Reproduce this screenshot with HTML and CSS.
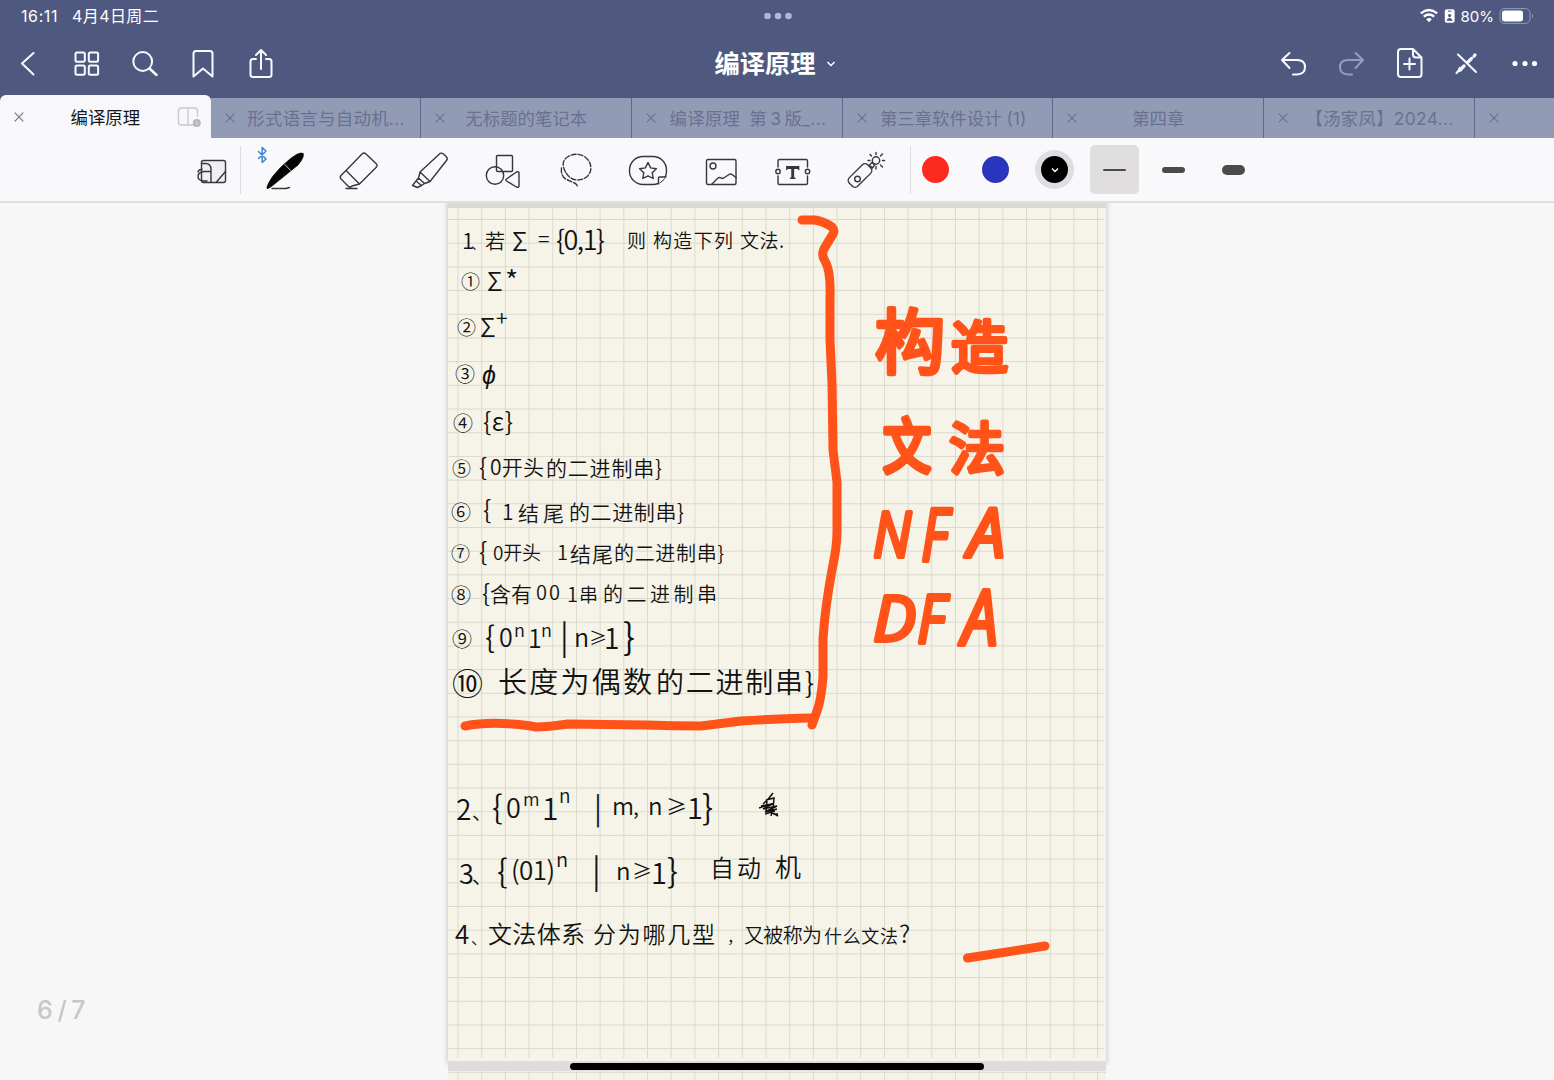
FILE: index.html
```html
<!DOCTYPE html>
<html lang="zh-CN">
<head>
<meta charset="utf-8">
<title>编译原理</title>
<link rel="stylesheet" href="styles.css">
</head>
<body>
<div class="app">
  <header class="header">
    <div class="status">
      <div class="status-left"><span>16:11</span><span class="date">4月4日周二</span></div>
      <svg class="dots" width="30" height="10" viewBox="762 11 30 10"><g fill="#abb6e4"><circle cx="766.5" cy="16" r="3.3"/><circle cx="777" cy="16" r="3.3"/><circle cx="787.5" cy="16" r="3.3"/></g></svg>
      <div class="status-right">
        <svg width="36" height="18" viewBox="1418 7 36 18"><g fill="none" stroke="#fff" stroke-width="2.4"><path d="M1419.8 13.4Q1428 6.600 1436.200 13.400M1422.800 16.700Q1428 12.400 1433.200 16.700"/></g><path d="M1425.200 19.200Q1428 16.800 1430.800 19.200L1428 22.300Z" fill="#fff"/><rect x="1443.800" y="9.300" width="9.800" height="13.400" rx="2" fill="#fff"/><path d="M1447 11.200h3.500M1446 20.300q2.600-4 5.200 0z" stroke="#4f597f" fill="#4f597f"/><circle cx="1448.600" cy="15.500" r="1.600" fill="#4f597f"/></svg>
        <span class="percent">80%</span>
        <svg width="35" height="18" viewBox="1499 7 35 18"><rect x="1500" y="8.600" width="30" height="14.800" rx="4.500" fill="none" stroke="#9299bd"/><rect x="1502" y="10.600" width="21" height="10.800" rx="2.600" fill="#fff"/><path d="M1532 13.500q2 2.500 0 5z" fill="#9299bd"/></svg>
      </div>
    </div>
    <div class="navbar">
      <nav class="actions">
        <svg viewBox="8 44 40 40"><path d="M33.500 53L22 63.500 33.500 74.500"/></svg>
        <svg viewBox="66.500 44 40 40"><rect x="76" y="52.500" width="9.300" height="9.300" rx="1.500"/><rect x="89.300" y="52.500" width="9.300" height="9.300" rx="1.500"/><rect x="76" y="65.500" width="9.300" height="9.300" rx="1.500"/><rect x="89.300" y="65.500" width="9.300" height="9.300" rx="1.500"/></svg>
        <svg viewBox="125 44 40 40"><circle cx="142.700" cy="61.500" r="9.400"/><path d="M149.500 68.500l7 6.500" stroke-width="2.500"/></svg>
        <svg viewBox="183 44 40 40"><path d="M193.500 76.500V53.500q0-2.500 2.500-2.500h14q2.500 0 2.500 2.500v23L203 68.500Z"/></svg>
        <svg viewBox="241 44 40 40"><path d="M256 59h-3q-2.500 0-2.500 2.500v13q0 2.500 2.500 2.500h16q2.500 0 2.500-2.500v-13q0-2.500-2.500-2.500h-3M261 69V50.500M256 55l5-5 5 5"/></svg>
      </nav>
      <h1 class="title">编译原理<svg class="chevron" viewBox="0 0 10 8"><path d="M1.500 2l3.500 3.500L8.500 2"/></svg></h1>
      <nav class="actions end">
        <svg viewBox="1274 44 40 40"><path d="M1289.500 53L1282 60l7.500 8M1282 60H1297q8 0 8 7t-8 7.500h-4"/></svg>
        <svg class="dim" viewBox="1332 44 40 40"><path d="M1355.500 53L1363 60l-7.500 8M1363 60H1348q-8 0-8 7t8 7.500h4"/></svg>
        <svg viewBox="1389 44 40 40"><path d="M1413 49h-12q-3 0-3 3v22q0 3 3 3h18q2.500 0 2.500-3V57.500ZM1413 49v5.500q0 3 3 3h5.500M1409.500 58.500v11M1404 64h11"/></svg>
        <svg viewBox="1447.500 44 40 40"><path d="M1458.500 54.500l18 17.500"/><path d="M1475.500 55l-1 1.200M1472 58.500l-4 4M1464.500 66l-4 4" stroke-width="3.200"/><path d="M1460 66.500l-4 7.500 7-4z" fill="#fff" stroke="none"/><path d="M1457 73l5-5"/></svg>
        <svg viewBox="1505 44 40 40"><g fill="#fff" stroke="none"><circle cx="1515" cy="63.500" r="2.600"/><circle cx="1525" cy="63.500" r="2.600"/><circle cx="1534.500" cy="63.500" r="2.600"/></g></svg>
      </nav>
    </div>
    <div class="tabs">
      <div class="tab active"><svg class="x" viewBox="0 0 10 10"><path d="M.7.700l8.600 8.600M9.300.700L.7 9.300"/></svg><span>编译原理</span><svg class="split" viewBox="177 106 26 22"><path d="M195 125h-14q-2.500 0-2.500-3v-11q0-3 2.500-3h13.500q3 0 3 3v6M188 108v17" fill="none" stroke="#c8c7cb" stroke-width="1.300"/><circle cx="196.800" cy="123" r="4" fill="#b5b4b9"/><path d="M193.500 123h6.500M196.800 120v6" stroke="#d8d7dc" stroke-width=".7"/></svg></div>
      <div class="tab long"><svg class="x" viewBox="0 0 10 10"><path d="M.7.700l8.600 8.600M9.300.700L.7 9.300"/></svg><span>形式语言与自动机...</span></div>
      <div class="tab"><svg class="x" viewBox="0 0 10 10"><path d="M.7.700l8.600 8.600M9.300.700L.7 9.300"/></svg><span>无标题的笔记本</span></div>
      <div class="tab long spaced"><svg class="x" viewBox="0 0 10 10"><path d="M.7.700l8.600 8.600M9.300.700L.7 9.300"/></svg><span>编译原理&ensp;第 3 版_...</span></div>
      <div class="tab long wide"><svg class="x" viewBox="0 0 10 10"><path d="M.7.700l8.600 8.600M9.300.700L.7 9.300"/></svg><span>第三章软件设计 (1)</span></div>
      <div class="tab"><svg class="x" viewBox="0 0 10 10"><path d="M.7.700l8.600 8.600M9.300.700L.7 9.300"/></svg><span>第四章</span></div>
      <div class="tab long"><svg class="x" viewBox="0 0 10 10"><path d="M.7.700l8.600 8.600M9.300.700L.7 9.300"/></svg><span>【汤家凤】2024...</span></div>
      <div class="tab"><svg class="x" viewBox="0 0 10 10"><path d="M.7.700l8.600 8.600M9.300.700L.7 9.300"/></svg></div>
    </div>
  </header>

  <div class="toolbar">
    <div class="tool mode"><svg viewBox="188 146 48 48"><rect x="201.500" y="160.500" width="24" height="22" rx="2" fill="#f0eff5"/><path d="M201.500 163.500h4q5.500 0 5.500 6v12.500M211 171.500h-7q-6 1-6 5t6 4.500h3M198 172q1-3 4-2.500M216.500 182l9-10.500"/></svg></div>
    <div class="tools">
      <div class="tool"><svg class="pen" viewBox="253 146 56 48"><path d="M258.500 151.500l7.500 7.500-3.800 3.500v-15l3.800 3.500-7.500 7.500" stroke="#3d86cf" stroke-width="1.500"/><path d="M303 153.500q2 3-5 11.500L272 186q-4 3-5 2.500-.5-3 6-12.500 7-9 17-17t13-5.500Z" fill="#050505" stroke="#050505" stroke-width=".8"/><path d="M285 164.500l5.500 6" stroke="#c5c5c5" stroke-width="1"/><path d="M272 188.500h14l3.500-1"/></svg></div>
      <div class="tool"><svg viewBox="334 146 48 48"><path d="M346 170.500L362 154q2-2 4 0l10 9.500q2 2 0 4L359.500 184ZM346 170.500l-5 5q-1.500 1.500 0 3.500l7 7q2 2 4 0l7.500-2M346 188.500h11"/></svg></div>
      <div class="tool"><svg viewBox="407 146 48 48"><path d="M421 172L441 153.500q2-1 3.500.5l3 3q1.500 1.500 0 3.500L431 181.500ZM421 172l-1.500 6 6 5.500 5.500-2M419.500 178l-2.500 3 5.500 4.500 3-2M417 181l-3.500 4.500 5 2 4-2"/></svg></div>
      <div class="tool"><svg viewBox="479 146 48 48"><rect x="496.500" y="155.500" width="16" height="16" rx="1"/><circle cx="495" cy="175.500" r="8.700"/><path d="M506.500 179l10-7q2-1 2.500 1v13q-.5 2-2.500 1l-10-6q-1.500-1 0-2Z"/></svg></div>
      <div class="tool"><svg viewBox="552 146 48 48"><path d="M565.500 172Q560 162 567.500 157q8-5 16-1 9 6 7 15-3 9-14 9-7-1-11-8" stroke-dasharray="5 2"/><path d="M561.500 168q-1 7 4 11l9 4q3 1.500 3 4" stroke-dasharray="5 2"/></svg></div>
      <div class="tool"><svg viewBox="624 146 48 48"><rect x="629.500" y="156.500" width="37" height="28" rx="13.500"/><path d="M648 162.500l2.600 5.400 5.800.8-4.200 4 1 5.800-5.200-2.700-5.200 2.700 1-5.800-4.200-4 5.800-.8Z"/><path d="M658.500 184v-6q0-1 1-1h6.500" fill="#f9f8fa"/></svg></div>
      <div class="tool"><svg viewBox="696 146 48 48"><rect x="705.500" y="159.500" width="29.500" height="25" rx="1.500"/><circle cx="712" cy="166" r="3"/><path d="M711 184l6-6q1.500-1 3 0l2 .5 6-4q1.500-1 3 0l4 3"/></svg></div>
      <div class="tool"><svg viewBox="769 146 48 48"><path d="M778 167v-6q0-1.500 1.500-1.500h26.500q1.500 0 1.500 1.500v6M778 176v7q0 1.500 1.500 1.500h26.500q1.500 0 1.500-1.500v-7"/><circle cx="778" cy="171.500" r="2.200"/><circle cx="807.500" cy="171.500" r="2.200"/><path d="M787 167.500h11.500M792.700 167.500v10.500" stroke-width="2.900" stroke-linecap="butt"/><path d="M786.800 166.500v3M798.700 166.500v3M790.500 178.300h4.500"/></svg></div>
      <div class="tool"><svg viewBox="842 146 48 48"><rect x="847" y="169.500" width="26" height="12" rx="4" transform="rotate(-45 860 175.500)"/><circle cx="857.500" cy="179" r="2.800"/><path d="M869.500 165l3 3 2-3-2.500-2.500Z"/><circle cx="876" cy="160.500" r="3.700"/><path d="M876 152.500v2M870 154.500l1.500 1.500M868 160.500h2M882.500 160.500h2M880.500 156l2-2M880.500 165l2 2M876 166.500v2.500"/></svg></div>
    </div>
    <div class="styles">
      <div class="swatch"><i class="red"></i></div>
      <div class="swatch"><i class="blue"></i></div>
      <div class="swatch"><i class="black"><svg viewBox="0 0 10 8"><path d="M2 2.500l3 3 3-3"/></svg></i></div>
      <div class="stroke selected"><i></i></div>
      <div class="stroke medium"><i></i></div>
      <div class="stroke thick"><i></i></div>
    </div>
  </div>

  <main class="canvas">
    <svg class="notes" viewBox="440 203 674 877">
      <defs>
        <pattern id="grid" x="457.500" y="219" width="23.690" height="23.690" patternUnits="userSpaceOnUse"><path d="M0 .5H23.690M.5 0V23.690" stroke="#dad9ce" fill="none"/></pattern>
        <filter id="shade" x="-5%" y="-5%" width="110%" height="110%"><feGaussianBlur stdDeviation="2.500"/></filter>
      </defs>
      <rect x="447" y="198" width="660" height="865" fill="#aaa8b0" opacity=".6" filter="url(#shade)"/>
      <rect x="448" y="203" width="659" height="5" fill="#d9dcd3"/>
      <rect x="448" y="208" width="658" height="853" fill="#f6f4e8"/>
      <rect x="448" y="208" width="656" height="850" fill="url(#grid)"/>
      <rect x="448" y="1061" width="658" height="10" fill="#dfdce0"/>
      <rect x="448" y="1071" width="658" height="9" fill="#f3f3e8"/>
      <rect x="448" y="1071" width="658" height="9" fill="url(#grid)"/>
      <g class="ink">
        <text x="462" y="249" font-size="22">1</text><text x="471" y="249" font-size="14">、</text><text x="485" y="249" font-size="20">若</text><text x="512" y="251" font-size="26">Σ</text><text x="538" y="247" font-size="21">=</text><text x="556" y="250" font-size="27" textLength="49">{0,1}</text><text x="627" y="248" font-size="19">则</text><text x="653" y="248" font-size="19" textLength="80">构造下列</text><text x="740" y="248" font-size="19" textLength="44">文法.</text>
        <text class="num" x="461" y="289" font-size="19">①</text><text x="487" y="291" font-size="26">Σ</text><text x="505" y="292" font-size="29">*</text>
        <text class="num" x="457" y="335" font-size="19">②</text><text x="480" y="337" font-size="26">Σ</text><text x="496" y="326" font-size="21">+</text>
        <text class="num" x="455" y="382" font-size="20">③</text><text x="482" y="384" font-size="25">ϕ</text>
        <text class="num" x="453" y="431" font-size="20">④</text><text x="483" y="431" font-size="25" textLength="30">{ε}</text>
        <text class="num" x="452" y="476" font-size="19">⑤</text><text x="479" y="476" font-size="24">{</text><text x="490" y="475" font-size="21" textLength="54">0开头</text><text x="546" y="476" font-size="21" textLength="116">的二进制串}</text>
        <text class="num" x="451" y="520" font-size="20">⑥</text><text x="483" y="519" font-size="25">{</text><text x="502" y="520" font-size="21">1</text><text x="518" y="521" font-size="21" textLength="46">结尾</text><text x="569" y="520" font-size="21" textLength="115">的二进制串}</text>
        <text class="num" x="451" y="561" font-size="19">⑦</text><text x="479" y="561" font-size="25">{</text><text x="493" y="560" font-size="19" textLength="48">0开头</text><text x="557" y="560" font-size="20">1</text><text x="570" y="562" font-size="21" textLength="43">结尾</text><text x="614" y="561" font-size="20" textLength="110">的二进制串}</text>
        <text class="num" x="451" y="603" font-size="20">⑧</text><text x="482" y="602" font-size="24">{</text><text x="490" y="602" font-size="21" textLength="42">含有</text><text x="536" y="600" font-size="20">0</text><text x="549" y="600" font-size="20">0</text><text x="567" y="602" font-size="20">1</text><text x="579" y="602" font-size="19">串</text><text x="603" y="602" font-size="20" textLength="114">的二进制串</text>
        <text class="num" x="452" y="647" font-size="20">⑨</text><text x="485" y="648" font-size="30">{</text><text x="499" y="647" font-size="25">0</text><text x="514" y="637" font-size="18">n</text><text x="528" y="648" font-size="25">1</text><text x="541" y="637" font-size="18">n</text><text x="560" y="649" font-size="33">|</text><text x="574" y="647" font-size="25">n</text><text x="589" y="645" font-size="18">≥</text><text x="604" y="649" font-size="28">1</text><text x="623" y="650" font-size="36">}</text>
        <text class="num" x="452" y="695" font-size="31">⑩</text><text x="498" y="693" font-size="29" textLength="154">长度为偶数</text><text x="656" y="693" font-size="28" textLength="158">的二进制串}</text>
        <text x="456" y="820" font-size="28">2</text><text x="472" y="820" font-size="20">、</text><text x="492" y="819" font-size="32">{</text><text x="506" y="818" font-size="27">0</text><text x="523" y="806" font-size="18">m</text><text x="542" y="820" font-size="30">1</text><text x="559" y="803" font-size="19">n</text><text x="594" y="819" font-size="30">|</text><text x="612" y="815" font-size="24">m</text><text x="633" y="815" font-size="22">,</text><text x="648" y="815" font-size="24">n</text><text x="666" y="814" font-size="21">≥</text><text x="687" y="819" font-size="29">1</text><text x="702" y="820" font-size="34">}</text>
        <text x="459" y="884" font-size="27">3</text><text x="472" y="884" font-size="20">、</text><text x="497" y="883" font-size="32">{</text><text x="511" y="880" font-size="26" textLength="44">(01)</text><text x="556" y="867" font-size="20">n</text><text x="592" y="883" font-size="33">|</text><text x="616" y="880" font-size="24">n</text><text x="632" y="879" font-size="20">≥</text><text x="651" y="884" font-size="29">1</text><text x="667" y="883" font-size="33">}</text><text x="710" y="877" font-size="24" textLength="51">自动</text><text x="775" y="877" font-size="26">机</text>
        <text x="455" y="944" font-size="26">4</text><text x="471" y="944" font-size="16">、</text><text x="488" y="943" font-size="24" textLength="97">文法体系</text><text x="593" y="943" font-size="23" textLength="122">分为哪几型</text><text x="727" y="943" font-size="16">，</text><text x="744" y="943" font-size="20" textLength="78">又被称为</text><text x="824" y="943" font-size="18" textLength="74">什么文法</text><text x="899" y="943" font-size="24">?</text>
      </g>
      <path d="M773 793q-4 6-10 11M766 800l8-2q0 9-3 18M767 800l-1 12M759 808l15-5-11 6 14-3-12 6 12-3M761 806l11-2M765 814l10-3M768 810l10 6M773 814h5" class="scribble"/>
      <g class="marker-text">
        <text x="875" y="368" font-size="70">构</text><text x="951" y="368" font-size="57">造</text>
        <text x="883" y="468" font-size="48" transform="translate(0 -112) scale(1 1.240)">文</text><text x="949" y="469" font-size="56">法</text>
        <text class="latin" x="873" y="557" font-size="62" textLength="38" lengthAdjust="spacingAndGlyphs">N</text><text class="latin" x="921" y="561" font-size="74" textLength="27" lengthAdjust="spacingAndGlyphs">F</text><text class="latin" x="968" y="557" font-size="67" textLength="37" lengthAdjust="spacingAndGlyphs">A</text>
        <text class="latin" x="873" y="641" font-size="62" textLength="43" lengthAdjust="spacingAndGlyphs">D</text><text class="latin" x="917" y="643" font-size="68" textLength="28" lengthAdjust="spacingAndGlyphs">F</text><text class="latin" x="962" y="645" font-size="76" textLength="36" lengthAdjust="spacingAndGlyphs">A</text>
      </g>
      <g class="marker"><path d="M802 220h13q10 2 17 7 3 3 1 7-5 8-9 15-3 6 1 12 6 10 5 38v40l2 45 1 66 4 32v50q0 15-5 38-7 38-9 69v38q-2 24-6 34l-5 14"/><path d="M465 726q20-4 47-2 14 1 24 3 12 0 32-3l78 1q28 1 55 1l40-5q30-2 71-3"/><path d="M967.500 958L1045 946"/></g>
    </svg>
    <div class="page-number">6 / 7</div>
    <div class="home-indicator"></div>
  </main>
</div>
</body>
</html>
```
FILE: styles.css
```css
* { box-sizing: border-box; }
body { margin: 0; font-family: Inter, "Noto Sans CJK SC", sans-serif; background: #f7f7f8; }
.app { width: 1554px; height: 1080px; display: flex; flex-direction: column; overflow: hidden; }
.header { height: 138px; background: #4f597f; color: #fff; display: flex; flex-direction: column; }
.status { height: 32px; display: grid; grid-template-columns: 1fr 30px 1fr; align-items: center; padding: 0 20px 0 21px; font-size: 15px; }
.status-left, .status-right { display: flex; align-items: center; }
.status-left { gap: 14px; font-size: 16px; line-height: 20px; letter-spacing: .6px; }
.date { letter-spacing: .4px; line-height: 18px; padding-bottom: 1px; }
.status-right { justify-content: flex-end; gap: 4px; }
.percent { margin: 0 1px 0 2px; }
.navbar { height: 63px; display: grid; grid-template-columns: 1fr auto 1fr; align-items: center; }
.actions { display: flex; gap: 18.300px; padding-left: 8px; }
.actions.end { justify-content: flex-end; gap: 17.800px; padding: 0 9px 0 0; }
.actions svg { width: 40px; height: 40px; fill: none; stroke: #f8faff; stroke-width: 2; stroke-linecap: round; stroke-linejoin: round; }
.actions .dim { stroke: #929cc5; }
.title { margin: 0 4px 3px 0; font-size: 25.300px; font-weight: 600; display: flex; align-items: center; gap: 10px; }
.chevron { width: 10px; height: 8px; margin-top: 3px; fill: none; stroke: #fff; stroke-width: 1.500; }
.tabs { height: 43px; display: flex; align-items: flex-end; }
.tab { flex: 0 0 210.700px; height: 40px; display: flex; align-items: center; padding: 0 24px 0 14px; background: #929bb5; color: #697190; border-right: 1px solid #5d6789; font-size: 17.400px; white-space: nowrap; }
.tab span { flex: 1; text-align: center; padding-bottom: 1px; }
.tab.long { padding-right: 3px; letter-spacing: .3px; }
.tab.long.wide { padding-right: 13px; letter-spacing: 0; }
.tab.long.spaced { word-spacing: -2px; padding-right: 2px; }
.tab.active { height: 43px; padding-right: 8px; background: #f8f8fa; color: #171719; border: 0; border-radius: 6px 6px 0 0; }
.tab.active span { padding-left: 10px; }
.x { width: 10px; height: 10px; stroke: currentColor; stroke-width: 1.200; }
.active .x { color: #77777a; }
.split { width: 26px; height: 22px; }
.toolbar { height: 65px; background: #f9f8fa; border-bottom: 2px solid #dedfe0; display: flex; align-items: center; padding-left: 188px; }
.mode { width: 53px; border-right: 1px solid #dddce0; }
.tool svg { display: block; width: 48px; height: 48px; fill: none; stroke: #38363b; stroke-width: 1.400; stroke-linejoin: round; stroke-linecap: round; }
.tool .pen { width: 56px; }
.tools { width: 670px; display: flex; gap: 24.650px; padding-left: 12px; border-right: 1px solid #dddce0; }
.styles { display: flex; gap: 10.500px; align-items: center; }
.swatch, .stroke { width: 49px; height: 49px; display: flex; align-items: center; justify-content: center; }
.swatch i { width: 27px; height: 27px; border-radius: 50%; display: flex; align-items: center; justify-content: center; }
.red { background: #fc2b20; }
.blue { background: #2935bd; }
.swatch .black { background: #000; box-shadow: 0 0 0 6px #dedde2; }
.black svg { width: 10px; height: 8px; fill: none; stroke: #fff; stroke-width: 1.400; }
.stroke i { width: 23px; height: 2px; border-radius: 9px; background: #4b4b4c; }
.selected { background: #e1dee0; border-radius: 5px; }
.stroke.medium i { height: 6px; }
.stroke.thick i { height: 10px; }
.canvas { height: 877px; position: relative; display: flex; padding-left: 440px; }
.notes { width: 674px; height: 877px; }
.ink { fill: #121212; font-family: "Noto Sans CJK SC", sans-serif; font-weight: 350; font-style: oblique 8deg; }
.ink .num { font-style: normal; }
.scribble { fill: none; stroke: #111; stroke-width: 1.500; }
.marker-text { fill: #ff5319; stroke: #ff5319; stroke-width: 4.500; stroke-linejoin: round; font-family: "Noto Sans CJK SC", sans-serif; font-weight: 400; }
.marker-text .latin { font-family: "Open Sans", sans-serif; font-style: italic; font-weight: 400; stroke-width: 4; }
.marker { fill: none; stroke: #ff5319; stroke-width: 9; stroke-linejoin: round; stroke-linecap: round; }
.page-number { position: absolute; left: 37px; top: 791px; font-size: 25px; line-height: 32px; font-weight: 500; color: #c7c7c9; word-spacing: -2px; }
.home-indicator { position: absolute; left: 570px; top: 860px; width: 414px; height: 7px; border-radius: 4px; background: #000; }
```
